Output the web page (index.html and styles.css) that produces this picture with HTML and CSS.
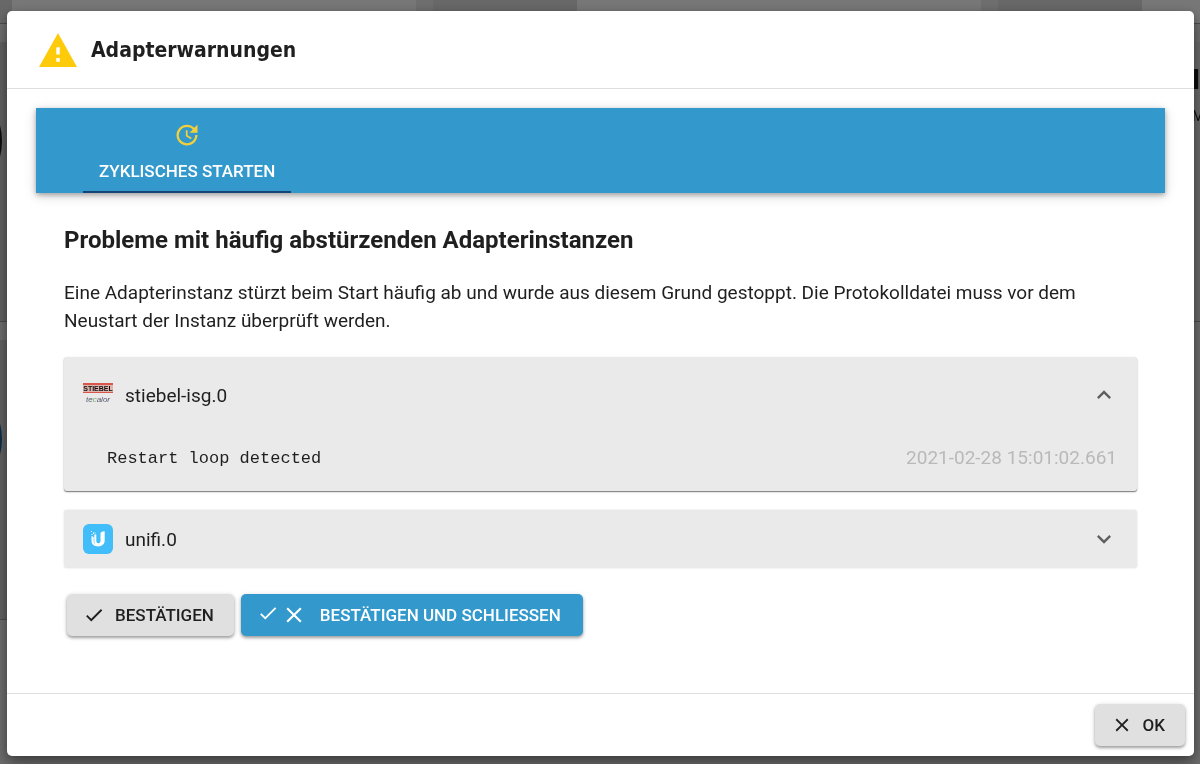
FILE: index.html
```html
<!DOCTYPE html>
<html lang="de">
<head>
<meta charset="utf-8">
<title>Adapterwarnungen</title>
<link rel="stylesheet" href="styles.css">
</head>
<body>
<div class="page" aria-hidden="true">
  <div class="page-grid">
    <div class="tile"><div class="tile-side"></div></div>
    <div class="tile"><div class="tile-side"></div></div>
    <div class="tile"><div class="tile-side"></div></div>
    <div class="tile"><div class="tile-side"><span class="disc"></span></div></div>
    <div class="tile"><div class="tile-side"></div></div>
    <div class="tile"><div class="tile-side"></div><div class="tile-body"><b class="tile-name">I</b><span>M</span></div></div>
    <div class="tile"><div class="tile-side"><span class="disc disc-blue"></span></div></div>
  </div>
</div>

<div class="dialog" role="dialog" aria-modal="true" aria-labelledby="dialog-title">
  <header class="dialog-header">
    <svg class="warning-icon" viewBox="1 2 22 19" preserveAspectRatio="none" aria-hidden="true"><path fill="#fecb0a" d="M1 21h22L12 2zm12-3h-2v-2h2zm0-4h-2v-4h2z"/></svg>
    <h1 class="dialog-title" id="dialog-title">Adapterwarnungen</h1>
  </header>

  <main class="dialog-content">
    <div class="tabs" role="tablist">
      <button class="tab" type="button" role="tab" aria-selected="true" id="tab-restart" aria-controls="panel-restart">
        <svg class="tab-icon" viewBox="0 0 24 24" aria-hidden="true"><path fill="#f2cf3b" d="M21 10.120h-6.780l2.740-2.820c-2.730-2.700-7.150-2.800-9.880-.1-2.730 2.710-2.730 7.080 0 9.790s7.150 2.710 9.880 0C18.320 15.650 19 14.080 19 12.100h2c0 1.980-.88 4.550-2.640 6.290-3.510 3.480-9.210 3.480-12.720 0-3.500-3.470-3.530-9.110-.02-12.580s9.140-3.470 12.650 0L21 3zM12.500 8v4.250l3.500 2.080-.72 1.210L11 13V8z"/></svg>
        <span>ZYKLISCHES STARTEN</span>
      </button>
    </div>

    <section class="panel" role="tabpanel" id="panel-restart" aria-labelledby="tab-restart">
      <h2 class="panel-title">Probleme mit häufig abstürzenden Adapterinstanzen</h2>
      <p class="panel-text">Eine Adapterinstanz stürzt beim Start häufig ab und wurde aus diesem Grund gestoppt. Die Protokolldatei muss vor dem Neustart der Instanz überprüft werden.</p>

      <div class="accordion">
        <div class="item item-open">
          <button class="item-head" type="button" aria-expanded="true">
            <span class="stiebel"><span class="stiebel-top">STIEBEL</span><span class="stiebel-bottom">te<i>c</i>alor</span></span>
            <span class="item-name">stiebel-isg.0</span>
            <svg class="chevron" viewBox="0 0 24 24" aria-hidden="true"><path fill="#5f5f5f" d="M12 8l-6 6 1.410 1.410L12 10.830l4.590 4.580L18 14z"/></svg>
          </button>
          <div class="item-body">
            <span class="message">Restart loop detected</span>
            <time class="stamp">2021-02-28 15:01:02.661</time>
          </div>
        </div>
        <div class="item item-closed">
          <button class="item-head" type="button" aria-expanded="false">
            <svg class="unifi" viewBox="0 0 30 30" aria-hidden="true">
              <rect width="30" height="30" rx="6" fill="#41bdf9"/>
              <path fill="#fff" d="M8.500 12l2.200 1v3.500c0 3 1 4.500 3.200 5.800C10.500 22 8.500 19.800 8.500 16.500zM17.500 9.500c0-1.300 1.200-2 4.200-2.300v9c0 4-2.800 6.200-6.500 6.200-2.600 0-3.900-2-3.900-4.800V10.500h2v6.300c0 1.700.7 2.500 2 2.500 1.500 0 2.200-.8 2.200-2.500z"/>
              <path fill="#fff" d="M8 7h1v1H8zM10 8.500h1v1.500h-1zM8.500 10h1v1h-1zM11.500 8.500h1v1h-1z"/>
            </svg>
            <span class="item-name">unifi.0</span>
            <svg class="chevron" viewBox="0 0 24 24" aria-hidden="true"><path fill="#5f5f5f" d="M16.590 8.590L12 13.170 7.410 8.590 6 10l6 6 6-6z"/></svg>
          </button>
        </div>
      </div>

      <div class="actions">
        <button class="button" type="button">
          <svg class="icon" viewBox="0 0 24 24" aria-hidden="true"><path fill="currentColor" d="M9 16.170L4.830 12l-1.420 1.410L9 19 21 7l-1.410-1.410z"/></svg>
          BESTÄTIGEN
        </button>
        <button class="button button-primary" type="button">
          <span class="icon-pair">
            <svg class="icon" viewBox="0 0 24 24" aria-hidden="true"><path fill="currentColor" d="M9 14.170L4.830 10l-1.420 1.410L9 17 21 5l-1.410-1.410z"/></svg>
            <svg class="icon icon-cross" viewBox="0 0 24 24" aria-hidden="true"><path fill="currentColor" d="M19 6.410L17.590 5 12 10.590 6.410 5 5 6.410 10.590 12 5 17.590 6.410 19 12 13.410 17.590 19 19 17.590 13.410 12z"/></svg>
          </span>
          BESTÄTIGEN UND SCHLIESSEN
        </button>
      </div>
    </section>
  </main>

  <footer class="dialog-footer">
    <button class="button" type="button">
      <svg class="icon" viewBox="0 0 24 24" aria-hidden="true"><path fill="currentColor" d="M19 6.410L17.590 5 12 10.590 6.410 5 5 6.410 10.590 12 5 17.590 6.410 19 12 13.410 17.590 19 19 17.590 13.410 12z"/></svg>
      OK
    </button>
  </footer>
</div>
</body>
</html>
```
FILE: styles.css
```css
* {
  box-sizing: border-box;
}

body {
  margin: 0;
  min-height: 100vh;
  padding: 11px 6px 8px 7px;
  display: flex;
  background: #6e6e6e;
  color: #1f1f1f;
  font-family: Roboto, "Liberation Sans", sans-serif;
}

button {
  border: 0;
  margin: 0;
  color: inherit;
  font-family: inherit;
  cursor: pointer;
}

/* dimmed page behind the dialog */
.page {
  position: fixed;
  inset: 0;
  overflow: hidden;
}

.page-grid {
  display: grid;
  grid-template-columns: repeat(3, 548px);
  grid-template-rows: 24px 280px 280px;
  gap: 18px 17px;
  margin-left: -132px;
}

.tile {
  display: flex;
  background: #777;
  border-bottom: 1px solid #4c4c4c;
}

.tile:nth-child(n + 4) {
  background: #6a6a6a;
}

.tile-side {
  width: 144px;
  flex: none;
  background: #686868;
}

.tile:nth-child(n + 4) .tile-side {
  background: #626262;
}

.disc {
  display: block;
  width: 130px;
  height: 130px;
  margin: 34px 0 0 4px;
  border-radius: 50%;
  background: #0c0c0c;
}

.disc-blue {
  background: #0c2d4a;
}

.tile-body {
  display: flex;
  flex-direction: column;
  gap: 12px;
  padding: 22px 0 0 50px;
  color: #0c0c0c;
  font-size: 14px;
}

.tile-name {
  font-size: 28px;
  line-height: 32px;
}

/* dialog */
.dialog {
  position: relative;
  flex: 1;
  min-width: 0;
  display: flex;
  flex-direction: column;
  background: #fff;
  border-radius: 5px;
  box-shadow: 0 11px 18px rgba(0, 0, 0, 0.3), 0 2px 8px rgba(0, 0, 0, 0.25);
}

.dialog-header {
  display: flex;
  align-items: center;
  gap: 14px;
  height: 78px;
  padding: 0 32px;
  border-bottom: 1px solid #dedede;
}

.warning-icon {
  width: 38px;
  height: 34px;
}

.dialog-title {
  margin: 0;
  font: bold 21px/30px "DejaVu Sans Condensed", "Noto Sans", sans-serif;
}

.dialog-content {
  flex: 1;
  padding: 19px 29px;
}

.tabs {
  display: flex;
  padding: 0 47px;
  background: #3399cc;
  box-shadow: 0 2px 5px rgba(0, 0, 0, 0.3), 0 3px 12px rgba(0, 0, 0, 0.14);
}

.tab {
  display: flex;
  flex-direction: column;
  align-items: center;
  gap: 10px;
  height: 85px;
  padding: 13px 16px 0;
  background: none;
  border-bottom: 2px solid #164477;
  color: #fff;
  font-size: 17px;
  font-weight: 500;
  line-height: 24px;
}

.tab-icon {
  width: 28px;
  height: 28px;
}

.panel {
  padding: 33px 28px 0;
}

.panel-title {
  margin: 0;
  font-size: 24px;
  line-height: 28px;
}

.panel-text {
  margin: 25px 0 0;
  font-size: 19px;
  line-height: 28px;
}

.accordion {
  display: flex;
  flex-direction: column;
  gap: 19px;
  margin-top: 22px;
}

.item {
  background: #eaeaea;
  border-radius: 3px;
  box-shadow: 0 1px 1px rgba(0, 0, 0, 0.45), 0 1px 3px rgba(0, 0, 0, 0.15);
}

.item-closed {
  box-shadow: 0 0 2px rgba(0, 0, 0, 0.15);
}

.item-head {
  display: flex;
  align-items: center;
  width: 100%;
  height: 58px;
  padding: 0 19px;
  background: none;
  font-size: 19px;
  text-align: left;
}

.item-open .item-head {
  height: 76px;
}

.item-name {
  flex: 1;
  margin-left: 12px;
}

.chevron {
  width: 28px;
  height: 28px;
}

.stiebel {
  width: 30px;
  display: flex;
  flex-direction: column;
  align-items: center;
  gap: 1px;
  padding-bottom: 2px;
  font-family: "Liberation Sans", sans-serif;
}

.stiebel-top {
  width: 30px;
  border: solid #d9574a;
  border-width: 2px 0 1px;
  background: #e0b4ae;
  color: #111;
  font-size: 7px;
  font-weight: bold;
  line-height: 7px;
  text-align: center;
}

.stiebel-bottom {
  color: #55586a;
  font-size: 8px;
  font-style: italic;
  line-height: 12px;
}

.stiebel-bottom i {
  color: #6cae5c;
}

.unifi {
  width: 30px;
  height: 30px;
}

.item-body {
  display: flex;
  align-items: center;
  justify-content: space-between;
  height: 58px;
  padding: 0 20px 10px 43px;
}

.message {
  padding-top: 3px;
  font-family: "Liberation Mono", monospace;
  font-size: 17px;
}

.stamp {
  color: #b9b9b9;
  font-size: 19px;
}

.actions {
  display: flex;
  flex-wrap: wrap;
  gap: 7px;
  padding: 26px 3px;
}

.button {
  display: flex;
  align-items: center;
  gap: 10px;
  height: 42px;
  padding: 0 20px 0 16px;
  background: #e0e0e0;
  border-radius: 5px;
  box-shadow: 0 2px 3px rgba(0, 0, 0, 0.3), 0 1px 5px rgba(0, 0, 0, 0.15);
  font-size: 17px;
  font-weight: 500;
}

.button-primary {
  gap: 13px;
  padding-right: 22px;
  background: #3399cc;
  color: #fff;
}

.icon {
  width: 22px;
  height: 22px;
}

.icon-pair {
  display: flex;
  align-items: center;
  gap: 2px;
}

.icon-cross {
  width: 26px;
  height: 26px;
}

.dialog-footer {
  display: flex;
  justify-content: flex-end;
  align-items: center;
  height: 63px;
  padding: 0 9px;
  border-top: 1px solid #dedede;
}
```
